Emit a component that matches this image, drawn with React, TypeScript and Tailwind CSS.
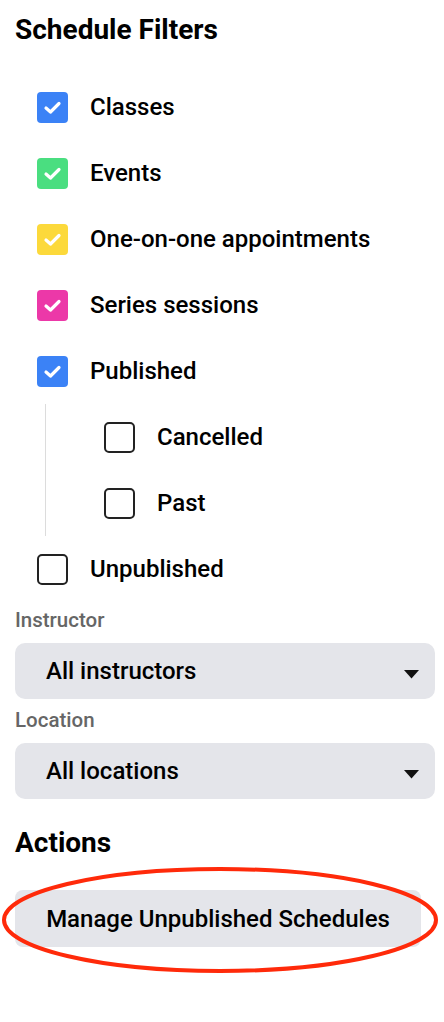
import React from "react";

function Check({ color }: { color?: string }) {
  if (!color) {
    return <div className="w-[31px] h-[31px] rounded-[5px] border-2 border-[#222] bg-white shrink-0" />;
  }
  return (
    <div className="w-[31px] h-[31px] rounded-[4px] shrink-0 flex items-center justify-center" style={{ backgroundColor: color }}>
      <svg width="31" height="31" viewBox="0 0 31 31">
        <path d="M9 16 L13.5 20 L22 11.5" fill="none" stroke="white" strokeWidth="3.2" strokeLinecap="round" strokeLinejoin="round" />
      </svg>
    </div>
  );
}

function Row({ label, color }: { label: string; color?: string }) {
  return (
    <div className="h-[66px] flex items-center gap-[22px]">
      <Check color={color} />
      <span className="text-[24px] font-medium text-black leading-none">{label}</span>
    </div>
  );
}

function Select({ value }: { value: string }) {
  return (
    <div className="w-[420px] h-[56px] rounded-[10px] bg-[#e4e5ea] flex items-center justify-between pl-[31px] pr-[16px]">
      <span className="text-[24px] font-medium text-black">{value}</span>
      <svg width="15" height="9" viewBox="0 0 15 9" className="mt-[6px]">
        <path d="M0 0 H15 L7.5 8.5 Z" fill="#111" />
      </svg>
    </div>
  );
}

export default function App() {
  return (
    <div className="min-h-[1022px] bg-white pl-[15px] pr-[9px] pt-[13px]" style={{ fontFamily: "Roboto, 'Liberation Sans', sans-serif" }}>
      <h1 className="text-[28px] leading-[34px] font-bold text-black">Schedule Filters</h1>
      <div className="mt-[27px] pl-[22px]">
        <Row label="Classes" color="#3b82f6" />
        <Row label="Events" color="#4ade80" />
        <Row label="One-on-one appointments" color="#fcd93b" />
        <Row label="Series sessions" color="#ec38a8" />
        <Row label="Published" color="#3b82f6" />
        <div className="ml-[8px] border-l border-[#dcdcdc] pl-[58px]">
          <Row label="Cancelled" />
          <Row label="Past" />
        </div>
        <Row label="Unpublished" />
      </div>
      <div className="mt-[6px] text-[20.5px] leading-[24px] font-medium text-[#666]">Instructor</div>
      <div className="mt-[11px]">
        <Select value="All instructors" />
      </div>
      <div className="mt-[9px] text-[20.5px] leading-[24px] font-medium text-[#666]">Location</div>
      <div className="mt-[11px]">
        <Select value="All locations" />
      </div>
      <h2 className="mt-[27px] text-[28px] leading-[34px] font-bold text-black">Actions</h2>
      <div className="relative mt-[30px] w-[406px]">
        <button className="w-full h-[57px] rounded-[8px] bg-[#e4e5ea] text-[24px] font-medium text-black flex items-center justify-center">
          Manage Unpublished Schedules
        </button>
        <svg className="absolute left-[-15px] top-[-25px] pointer-events-none" width="444" height="110" viewBox="0 0 444 110">
          <ellipse cx="220" cy="55" rx="216" ry="51" fill="none" stroke="#ff2a0a" strokeWidth="4" />
        </svg>
      </div>
    </div>
  );
}
